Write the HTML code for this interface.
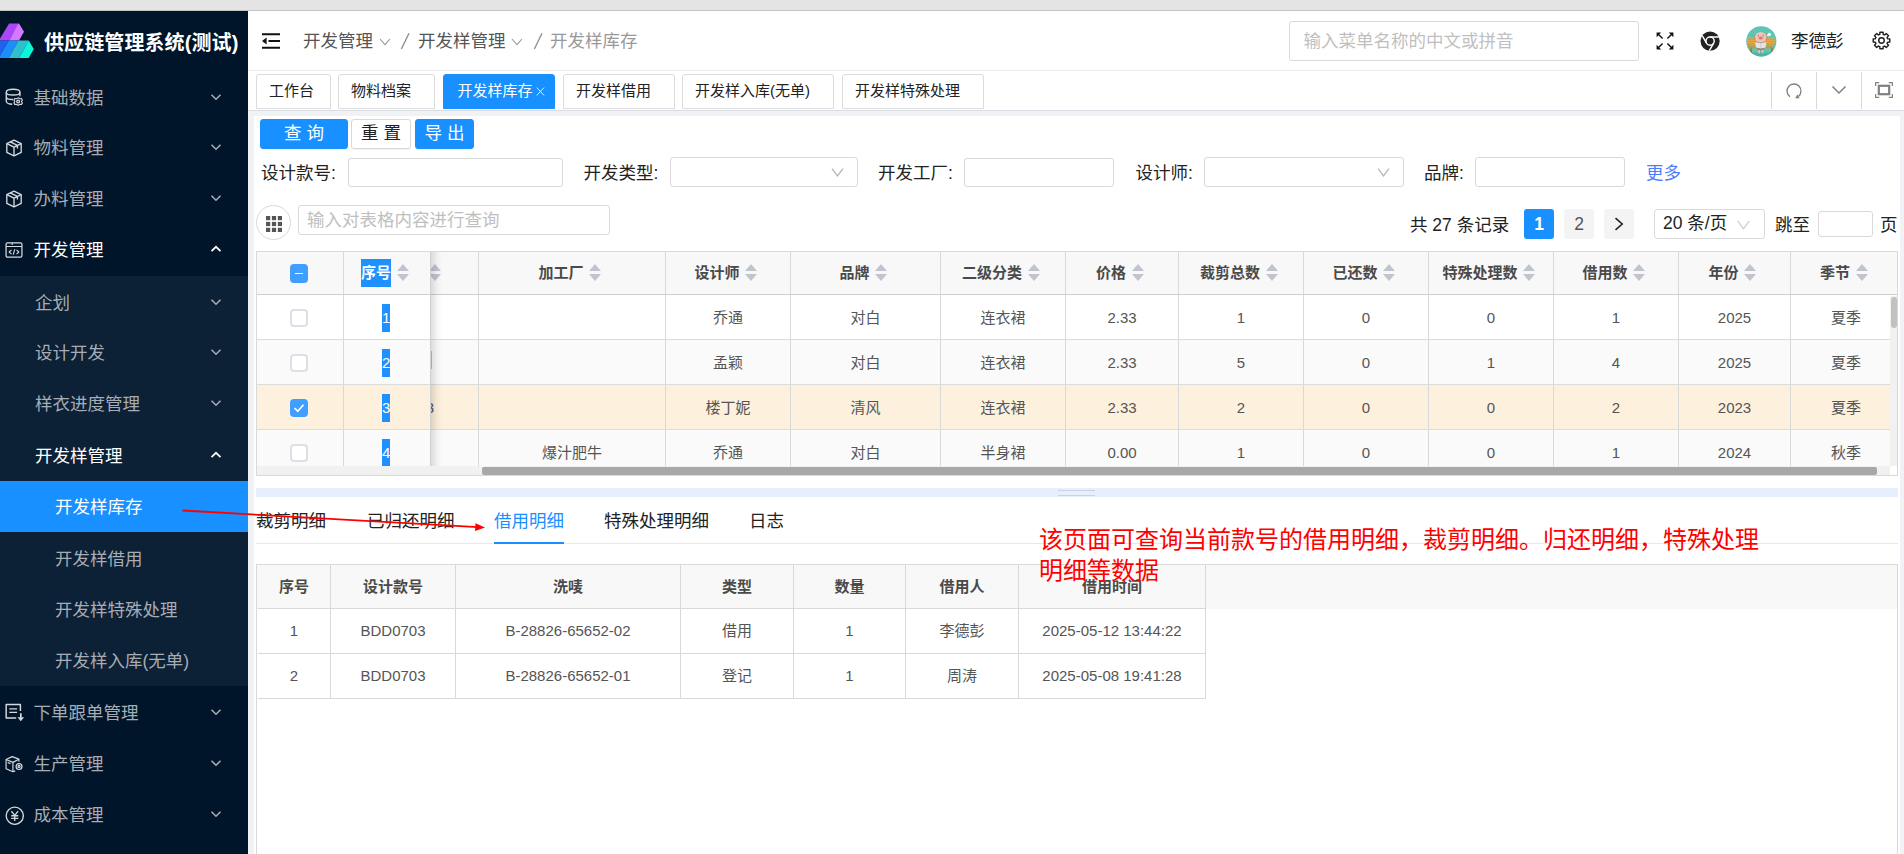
<!DOCTYPE html>
<html lang="zh-CN">
<head>
<meta charset="utf-8">
<title>供应链管理系统(测试)</title>
<style>
*{box-sizing:border-box;margin:0;padding:0}
html,body{width:1904px;height:854px;overflow:hidden}
body{position:relative;background:#f0f2f5;font-family:"Liberation Sans","Noto Sans CJK SC",sans-serif;font-size:17.5px;color:#222;}
.abs{position:absolute}
.t{position:absolute;white-space:nowrap;line-height:1}
/* top strip */
#strip{left:0;top:0;width:1904px;height:11px;background:#e4e4e4;border-bottom:1px solid #c4c4c4}
/* sidebar */
#side{left:0;top:11px;width:248px;height:843px;background:#001529}
#sub{left:0;top:265px;width:248px;height:410px;background:#0c2036}
#active{left:0;top:470px;width:248px;height:51px;background:#1890ff}
.mi{position:absolute;left:33.5px;height:30px;line-height:30px;font-size:17.5px;color:#a6adb4;white-space:nowrap}
.mi.w{color:#fff}
.mi.s1{left:35px}
.mi.s2{left:55px}
.arr{position:absolute;left:210px;width:12px;height:8px;margin-top:-1px}
.ico{position:absolute;left:5px;width:18px;height:18px;margin-top:1px}
#title{left:44px;top:20px;height:24px;line-height:24px;font-size:20px;font-weight:bold;color:#fff;letter-spacing:0.1px}
/* header */
#head{left:248px;top:11px;width:1656px;height:60px;background:#fff;border-bottom:1px solid #ebebeb}
.bc{position:absolute;top:18px;height:24px;line-height:24px;font-size:17.5px;color:#555;white-space:nowrap}
#hsearch{left:1041px;top:10px;width:350px;height:40px;border:1px solid #d9d9d9;border-radius:3px;background:#fff;color:#bfbfbf;font-size:17.5px;line-height:38px;padding-left:13.5px;white-space:nowrap}
/* tab bar */
#tabs{left:248px;top:71px;width:1656px;height:40px;background:#fff;border-bottom:1px solid #d9dce2}
.tab{position:absolute;top:3px;height:35px;border:1px solid #dcdcdc;border-radius:3px 3px 0 0;background:#fff;font-size:15px;line-height:32px;color:#222;text-align:left;padding-left:12px;white-space:nowrap}
.tab.on{background:#1890ff;border-color:#1890ff;color:#fff}
.tdiv{position:absolute;top:1px;width:1px;height:37px;background:#d9d9d9}
/* panel */
#panel{left:254px;top:116px;width:1646px;height:738px;background:#fff}
.btn{position:absolute;top:3px;height:30px;border-radius:3px;font-size:17.5px;line-height:27px;text-align:center;white-space:nowrap;border:1px solid #d9d9d9;background:#fff;color:#222;box-shadow:0 1px 1px rgba(0,0,0,.05)}
.btn.p{background:#1890ff;border-color:#1890ff;color:#fff}
.lab{position:absolute;top:45px;height:24px;line-height:24px;font-size:17.5px;color:#222;white-space:nowrap}
.inp{position:absolute;top:42px;height:29px;border:1px solid #d9d9d9;border-radius:3px;background:#fff}
.sel{top:41px;height:30px}
.chev{position:absolute;right:13px;top:9px;width:13px;height:10.500px}
/* pagination */
.pg{position:absolute;top:93px;width:30px;height:30px;border-radius:3px;background:#f4f4f5;font-size:17.5px;line-height:31px;text-align:center;color:#555}
.pg.on{background:#1890ff;color:#fff;font-weight:bold}
/* main table */
#mt{left:2px;top:135px;width:1642px;height:225px;border:1px solid #d9d9d9;overflow:hidden;background:#fff}
.hbg{top:0;height:44px;background:#f8f8f9;border-bottom:2px solid #cecece}
.hc{position:absolute;top:0;height:42px;border-right:1px solid #d9d9d9;font-size:15px;font-weight:bold;color:#4a4a4a;line-height:41px;text-align:center;white-space:nowrap;padding-right:4px}
.row{position:absolute;left:0;width:1639px;height:45px;border-bottom:1px solid #dcdcdc;background:#fff}
.row.alt{background:#fafafa}
.row.selr{background:#fdf0dd}
.c{position:absolute;top:0;height:44px;border-right:1px solid #d9d9d9;font-size:15px;color:#555;line-height:45px;text-align:center;white-space:nowrap}
.sort{display:inline-block;position:relative;width:12.5px;height:16px;vertical-align:middle;margin-left:5.5px;margin-top:-3px}
.sort:before,.sort:after{content:'';position:absolute;left:0;border:6.25px solid transparent}
.sort:before{top:-7px;border-bottom:7.5px solid #c0c4cc}
.sort:after{top:9.5px;border-top:7px solid #c0c4cc}
.cb{position:absolute;left:31.5px;width:18.5px;height:18.5px;border:2px solid #dcdfe6;border-radius:4px;background:#fff}
.cb.on{background:#409eff;border-color:#409eff}
.hl{background:#1e90ff;color:#fff;display:inline-block;line-height:28px;height:28px}
/* bottom tabs */
.bt{position:absolute;top:392px;height:26px;line-height:26px;font-size:17.5px;color:#222;white-space:nowrap}
/* bottom table */
.bh{position:absolute;top:0;height:44px;border-right:1px solid #d9d9d9;font-size:15px;font-weight:bold;color:#4a4a4a;line-height:43px;text-align:center;white-space:nowrap}
.bc2{position:absolute;height:45px;border-right:1px solid #d9d9d9;border-bottom:1px solid #d9d9d9;font-size:15px;color:#555;line-height:44px;text-align:center;white-space:nowrap}
.red{position:absolute;left:785px;font-size:24px;line-height:32px;color:#ff0000;white-space:nowrap}
</style>
</head>
<body>
<div id="strip" class="abs"></div>

<!-- SIDEBAR -->
<div id="side" class="abs">
  <div id="sub" class="abs"></div>
  <div id="active" class="abs"></div>
  <svg class="abs" style="left:0;top:12px" width="36" height="36" viewBox="0 0 36 36">
    <polygon points="9.1,0.4 19,0.4 9.4,17.6 0,17.6 0,15.4" fill="#ab47f8"/>
    <polygon points="17.6,1.7 19,0.4 24,8.7 19,17.6 9.4,17.6" fill="#d678ff"/>
    <polygon points="0,17.6 8.8,17.6 0,32.4" fill="#1f62ee"/>
    <polygon points="8.8,17.6 18.4,17.6 8.8,35 0,35 0,32.4" fill="#1c8dfb"/>
    <polygon points="18.4,17.6 28.7,17.6 19,35 8.8,35" fill="#2fc0cf"/>
    <polygon points="28.7,17.6 33.8,26.1 28.7,35 19,35" fill="#08f8d8"/>
  </svg>
  <div id="title" class="t">供应链管理系统(测试)</div>

  <!-- root items -->
  <svg class="ico" style="top:75.5px" viewBox="0 0 20 20" fill="none" stroke="#d5d9de" stroke-width="1.5"><ellipse cx="9" cy="4.6" rx="7.6" ry="3.2"/><path d="M1.4 4.6v10.2c0 1.8 3.2 3.2 6.6 3.2M16.6 4.6v4.6M1.4 9.6c0 1.8 3.4 3.2 7.6 3.2"/><circle cx="14.6" cy="15" r="1.5"/><path d="M14.6 10.9l1.9 1 1.9-.1.9 1.7-1 1.5 1 1.6-.9 1.6-1.9 0-1.9 1-1.9-1-1.9 0-.9-1.6 1-1.6-1-1.5.9-1.7 1.9.1z" stroke-width="1.2"/></svg>
  <div class="mi" style="top:71.5px">基础数据</div>
  <svg class="arr" style="top:82.5px" viewBox="0 0 12 8" fill="none" stroke="#a6adb4" stroke-width="1.6"><path d="M1.5 1.8L6 6.2l4.5-4.4"/></svg>

  <svg class="ico" style="top:127px" viewBox="0 0 20 20" fill="none" stroke="#d5d9de" stroke-width="1.5" stroke-linejoin="round"><path d="M10 1.2l8 3.9v9.8l-8 3.9-8-3.9V5.1z"/><path d="M2 5.1l8 3.9 8-3.9M10 9v9.8M5.8 3.2l8 3.9v3.4"/></svg>
  <div class="mi" style="top:122px">物料管理</div>
  <svg class="arr" style="top:133px" viewBox="0 0 12 8" fill="none" stroke="#a6adb4" stroke-width="1.6"><path d="M1.5 1.8L6 6.2l4.5-4.4"/></svg>

  <svg class="ico" style="top:178px" viewBox="0 0 20 20" fill="none" stroke="#d5d9de" stroke-width="1.5" stroke-linejoin="round"><path d="M10 1.2l8 3.9v9.8l-8 3.9-8-3.9V5.1z"/><path d="M2 5.1l8 3.9 8-3.9M10 9v9.8M5.8 3.2l8 3.9v3.4"/></svg>
  <div class="mi" style="top:173px">办料管理</div>
  <svg class="arr" style="top:184px" viewBox="0 0 12 8" fill="none" stroke="#a6adb4" stroke-width="1.6"><path d="M1.5 1.8L6 6.2l4.5-4.4"/></svg>

  <svg class="ico" style="top:229px" viewBox="0 0 20 20" fill="none" stroke="#d5d9de" stroke-width="1.4" stroke-linejoin="round"><rect x="1.2" y="2" width="17.6" height="16" rx="1.5"/><path d="M1.2 6.2h17.6M8 2v2.4M7.2 9.8l-2.6 2.4 2.6 2.4M12.8 9.8l2.6 2.4-2.6 2.4M10.9 9.2l-1.8 6" stroke-width="1.2"/></svg>
  <div class="mi w" style="top:224px">开发管理</div>
  <svg class="arr" style="top:235px" viewBox="0 0 12 8" fill="none" stroke="#fff" stroke-width="1.7"><path d="M1.5 6.2L6 1.8l4.5 4.4"/></svg>

  <!-- sub items -->
  <div class="mi s1" style="top:276.5px">企划</div>
  <svg class="arr" style="top:287.5px" viewBox="0 0 12 8" fill="none" stroke="#a6adb4" stroke-width="1.6"><path d="M1.5 1.8L6 6.2l4.5-4.4"/></svg>
  <div class="mi s1" style="top:327px">设计开发</div>
  <svg class="arr" style="top:338px" viewBox="0 0 12 8" fill="none" stroke="#a6adb4" stroke-width="1.6"><path d="M1.5 1.8L6 6.2l4.5-4.4"/></svg>
  <div class="mi s1" style="top:378px">样衣进度管理</div>
  <svg class="arr" style="top:389px" viewBox="0 0 12 8" fill="none" stroke="#a6adb4" stroke-width="1.6"><path d="M1.5 1.8L6 6.2l4.5-4.4"/></svg>
  <div class="mi s1 w" style="top:429.5px">开发样管理</div>
  <svg class="arr" style="top:440.5px" viewBox="0 0 12 8" fill="none" stroke="#fff" stroke-width="1.7"><path d="M1.5 6.2L6 1.8l4.5 4.4"/></svg>
  <div class="mi s2 w" style="top:481px">开发样库存</div>
  <div class="mi s2" style="top:532.5px">开发样借用</div>
  <div class="mi s2" style="top:583.5px">开发样特殊处理</div>
  <div class="mi s2" style="top:634.5px">开发样入库(无单)</div>

  <!-- root items 2 -->
  <svg class="ico" style="top:690.5px;width:19.5px;height:19.5px" viewBox="0 0 20 20" fill="none" stroke="#d5d9de" stroke-width="1.5" stroke-linejoin="round"><path d="M11.5 15.4H1.2V1.6h14.6v6.6"/><path d="M4.4 6h8M4.4 9.6h8" stroke-width="1.3"/><path d="M16.2 10.500v6" stroke-width="1.800"/><path d="M12.800 14.600l3.400 4.200 3.400-4.200z" fill="#d5d9de" stroke="none"/></svg>
  <div class="mi" style="top:687px">下单跟单管理</div>
  <svg class="arr" style="top:698px" viewBox="0 0 12 8" fill="none" stroke="#a6adb4" stroke-width="1.6"><path d="M1.5 1.8L6 6.2l4.5-4.4"/></svg>

  <svg class="ico" style="top:742.5px" viewBox="0 0 20 20" fill="none" stroke="#d5d9de" stroke-width="1.3" stroke-linejoin="round"><path d="M11.4 17.6l-2.6 1-7.6-3.4V5l6.8-3.2 7.4 2.8v3"/><path d="M1.2 5l7.6 3.2 6.6-3.6M8.8 8.2v10.4M3 8.4l3 1.2"/><circle cx="15.6" cy="12.8" r="3.3"/><circle cx="15.6" cy="12.8" r="1.2"/></svg>
  <div class="mi" style="top:738px">生产管理</div>
  <svg class="arr" style="top:749px" viewBox="0 0 12 8" fill="none" stroke="#a6adb4" stroke-width="1.6"><path d="M1.5 1.8L6 6.2l4.5-4.4"/></svg>

  <svg class="ico" style="top:793.5px;width:19.5px;height:19.5px;left:4.5px" viewBox="0 0 20 20" fill="none" stroke="#d5d9de" stroke-width="1.4"><circle cx="10" cy="10" r="8.8"/><path d="M6.6 5.4L10 9.6l3.4-4.2M10 9.6v5.8M6.4 10h7.2M6.4 12.8h7.2" stroke-width="1.3"/></svg>
  <div class="mi" style="top:789px">成本管理</div>
  <svg class="arr" style="top:800px" viewBox="0 0 12 8" fill="none" stroke="#a6adb4" stroke-width="1.6"><path d="M1.5 1.8L6 6.2l4.5-4.4"/></svg>
</div>

<!-- HEADER -->
<div id="head" class="abs">
  <!-- fold icon -->
  <svg class="abs" style="left:14px;top:22px" width="18" height="16" viewBox="0 0 18 16"><path d="M0 0.2h18v2H0zM6.5 7h11.5v2H6.5zM0 13.8h18v2H0z" fill="#111"/><path d="M0 8l4.6-3.4v6.8z" fill="#111"/></svg>
  <div class="bc" style="left:55px">开发管理</div>
  <svg class="abs" style="left:131px;top:26px" width="12" height="10" viewBox="0 0 12 10" fill="none" stroke="#999" stroke-width="1.1"><path d="M1 2l5 5.6L11 2"/></svg>
  <svg class="abs" style="left:152px;top:21px" width="10" height="18" viewBox="0 0 10 18"><path d="M1.400 17L9 1.200" stroke="#8a8a8a" stroke-width="1.300" fill="none"/></svg>
  <div class="bc" style="left:170px">开发样管理</div>
  <svg class="abs" style="left:263px;top:26px" width="12" height="10" viewBox="0 0 12 10" fill="none" stroke="#999" stroke-width="1.1"><path d="M1 2l5 5.6L11 2"/></svg>
  <svg class="abs" style="left:284.500px;top:21px" width="10" height="18" viewBox="0 0 10 18"><path d="M1.400 17L9 1.200" stroke="#8a8a8a" stroke-width="1.300" fill="none"/></svg>
  <div class="bc" style="left:302px;color:#999">开发样库存</div>
  <div id="hsearch" class="abs">输入菜单名称的中文或拼音</div>
  <!-- fullscreen -->
  <svg class="abs" style="left:1408px;top:21px" width="18" height="18" viewBox="0 0 18 18" fill="#111" stroke="#111" stroke-width="1.4"><path d="M2 2l4.6 4.6M16 2l-4.6 4.6M2 16l4.6-4.6M16 16l-4.6-4.6" fill="none"/><path d="M.6.6h4.6L.6 5.2zM17.400.6v4.600L12.800.6zM.6 17.400v-4.600l4.600 4.600zM17.400 17.400h-4.600l4.600-4.600z" stroke="none"/></svg>
  <!-- chrome -->
  <svg class="abs" style="left:1452.300px;top:19.500px" width="20.200" height="20.200" viewBox="0 0 21 21"><circle cx="10.500" cy="10.500" r="10" fill="#222"/><circle cx="10.500" cy="10.500" r="4.300" fill="none" stroke="#fff" stroke-width="1.500"/><path d="M10.500 6.200H19.600M6.800 12.650L2.300 4.800M14.200 12.650L9.700 20.400" stroke="#fff" stroke-width="1.500" fill="none"/></svg>
  <!-- avatar -->
  <svg class="abs" style="left:1497.500px;top:15px" width="31" height="31" viewBox="0 0 31 31"><defs><clipPath id="avc"><circle cx="15.300" cy="15.300" r="15.100"/></clipPath></defs><g clip-path="url(#avc)"><rect width="31" height="31" fill="#5cc5b3"/><rect x="0" y="26.500" width="31" height="5" fill="#4db3a2"/><rect x="1" y="11.400" width="27.600" height="1.300" fill="#e9a542"/><rect x="1" y="13.700" width="27.600" height="1.300" fill="#e9a542"/><rect x="1" y="16" width="27.600" height="1.300" fill="#e9a542"/><rect x="1" y="18.300" width="27.600" height="1.300" fill="#e39a38"/><rect x="2" y="20.300" width="26" height="2" fill="#d98f2f"/><rect x="4.300" y="22.300" width="1.400" height="5" fill="#a8661d"/><rect x="25.300" y="22.300" width="1.400" height="5" fill="#a8661d"/><ellipse cx="14.600" cy="20" rx="4.200" ry="4.500" fill="#8d8480"/><ellipse cx="9.400" cy="11" rx="1.900" ry="2.600" fill="#c98a78" transform="rotate(20 9.400 11)"/><ellipse cx="20" cy="10.600" rx="1.900" ry="2.600" fill="#c98a78" transform="rotate(-20 20 10.600)"/><ellipse cx="14.700" cy="11.300" rx="5.700" ry="5.200" fill="#ecc6b4"/><ellipse cx="14.700" cy="12" rx="2.100" ry="1.500" fill="#e0727c"/><circle cx="12.300" cy="9.800" r=".5" fill="#333"/><circle cx="17.100" cy="9.800" r=".5" fill="#333"/><path d="M9.200 16.200L14.700 17.300L20.400 16.200L19.600 21.600L14.700 22.400L9.900 21.600z" fill="#e4e4e4"/><path d="M14.700 17.300v5" stroke="#c2c2c2" stroke-width=".5"/><rect x="12.200" y="24" width="1.700" height="3.300" fill="#ecc6b4"/><rect x="15.600" y="24" width="1.700" height="3.300" fill="#ecc6b4"/><circle cx="23.300" cy="8.400" r="1.700" fill="#f3f6f4"/><circle cx="22" cy="9.600" r="1" fill="#f3f6f4"/></g></svg>
  <div class="bc" style="left:1543px;color:#222">李德彭</div>
  <!-- gear -->
  <svg class="abs" style="left:1623.500px;top:20px" width="19" height="19" viewBox="0 0 20 20" fill="none" stroke="#1f1f1f" stroke-width="1.500" stroke-linejoin="round"><circle cx="10" cy="10" r="2.900"/><path d="M8.21 3.54L8.30 1.26L11.70 1.26L11.79 3.54L13.30 4.17L14.98 2.62L17.38 5.02L15.83 6.70L16.46 8.21L18.74 8.30L18.74 11.70L16.46 11.79L15.83 13.30L17.38 14.98L14.98 17.38L13.30 15.83L11.79 16.46L11.70 18.74L8.30 18.74L8.21 16.46L6.70 15.83L5.02 17.38L2.62 14.98L4.17 13.30L3.54 11.79L1.26 11.70L1.26 8.30L3.54 8.21L4.17 6.70L2.62 5.02L5.02 2.62L6.70 4.17z"/></svg>
</div>

<!-- TAB BAR -->
<div id="tabs" class="abs">
  <div class="tab" style="left:8px;width:75px">工作台</div>
  <div class="tab" style="left:90px;width:97px">物料档案</div>
  <div class="tab on" style="left:195px;width:112px;padding-left:13.500px">开发样库存<svg style="position:absolute;left:92px;top:11.500px" width="9" height="9" viewBox="0 0 9 9" fill="none" stroke="#e6f2ff" stroke-width="1"><path d="M0.800 0.600L8 8.400M8 0.600L0.800 8.400"/></svg></div>
  <div class="tab" style="left:315px;width:112px">开发样借用</div>
  <div class="tab" style="left:434px;width:152px">开发样入库(无单)</div>
  <div class="tab" style="left:594px;width:142px">开发样特殊处理</div>
  <div class="tdiv" style="left:1523px"></div>
  <div class="tdiv" style="left:1568px"></div>
  <div class="tdiv" style="left:1613px"></div>
  <svg class="abs" style="left:1537.400px;top:10.600px" width="18" height="18" viewBox="0 0 18 18" fill="none" stroke="#808080" stroke-width="1.300"><path d="M4.980 14.730A7 7 0 1 1 13.400 14.400"/><path d="M10.200 16.200L14.600 16.300L12.300 12.600z" fill="#808080" stroke="none"/></svg>
  <svg class="abs" style="left:1583px;top:14px" width="16" height="10" viewBox="0 0 16 10" fill="none" stroke="#808080" stroke-width="1.500"><path d="M1.500 1.500L8 8l6.500-6.500"/></svg>
  <svg class="abs" style="left:1627px;top:11px" width="18" height="16" viewBox="0 0 18 16" fill="none" stroke="#808080"><rect x="3.800" y="3.800" width="10.400" height="8.400" stroke-width="2.200"/><path d="M.6 4V.6h3.600M13.800.6h3.600V4M17.400 12v3.400h-3.600M4.200 15.400H.6V12" stroke-width="1.200"/></svg>
</div>

<!-- PANEL -->
<div id="panel" class="abs">
  <div class="btn p" style="left:6px;width:88px">查 询</div>
  <div class="btn" style="left:97px;width:60px">重 置</div>
  <div class="btn p" style="left:161px;width:59px">导 出</div>
  <div class="lab" style="left:7px">设计款号:</div><div class="inp" style="left:94px;width:215px"></div>
  <div class="lab" style="left:329.5px">开发类型:</div><div class="inp sel" style="left:416px;width:188px"><svg class="chev" viewBox="0 0 12 10" fill="none" stroke="#b5b5b5" stroke-width="1.2"><path d="M0.8 1.5L6 8.500L11.200 1.500"/></svg></div>
  <div class="lab" style="left:624px">开发工厂:</div><div class="inp" style="left:710px;width:150px"></div>
  <div class="lab" style="left:881.5px">设计师:</div><div class="inp sel" style="left:950px;width:200px"><svg class="chev" viewBox="0 0 12 10" fill="none" stroke="#b5b5b5" stroke-width="1.2"><path d="M0.8 1.5L6 8.500L11.200 1.500"/></svg></div>
  <div class="lab" style="left:1170px">品牌:</div><div class="inp sel" style="left:1221px;width:150px"></div>
  <div class="lab" style="left:1392px;color:#4a7dff">更多</div>
  <div class="abs" style="left:2px;top:89px;width:35px;height:35px;border:1px solid #d9d9d9;border-radius:50%;background:#fff"><svg class="abs" style="left:9px;top:9.5px" width="16" height="16" viewBox="0 0 16 16" fill="#555"><rect x="0" y="0" width="4.2" height="4.2"/><rect x="5.9" y="0" width="4.2" height="4.2"/><rect x="11.8" y="0" width="4.2" height="4.2"/><rect x="0" y="5.9" width="4.2" height="4.2"/><rect x="5.9" y="5.9" width="4.2" height="4.2"/><rect x="11.8" y="5.9" width="4.2" height="4.2"/><rect x="0" y="11.8" width="4.2" height="4.2"/><rect x="5.9" y="11.8" width="4.2" height="4.2"/><rect x="11.8" y="11.8" width="4.2" height="4.2"/></svg></div>
  <div class="abs" style="left:44px;top:89px;width:312px;height:30px;border:1px solid #d9d9d9;border-radius:3px;color:#bfbfbf;font-size:17.5px;line-height:29px;padding-left:8px;white-space:nowrap">输入对表格内容进行查询</div>
  <div class="lab" style="left:1156px;top:96.5px">共 27 条记录</div>
  <div class="pg on" style="left:1270px">1</div><div class="pg" style="left:1310px">2</div>
  <div class="pg" style="left:1350px"><svg style="position:absolute;left:10px;top:8px" width="10" height="14" viewBox="0 0 10 14" fill="none" stroke="#222" stroke-width="1.6"><path d="M1.5 1.2L8.2 7L1.5 12.800"/></svg></div>
  <div class="abs" style="left:1400px;top:93px;width:110.5px;height:29.5px;border:1px solid #d9d9d9;border-radius:3px;font-size:17.5px;line-height:27px;padding-left:8px;color:#222;white-space:nowrap">20 条/页<svg style="position:absolute;right:13.5px;top:9.5px" width="13" height="10" viewBox="0 0 13 10" fill="none" stroke="#c4c8cf" stroke-width="1.2"><path d="M0.8 1L6.5 8.8L12.2 1"/></svg></div>
  <div class="lab" style="left:1521px;top:96.5px">跳至</div>
  <div class="abs" style="left:1564px;top:94.5px;width:54.5px;height:26px;border:1px solid #d9d9d9;border-radius:3px"></div>
  <div class="lab" style="left:1626px;top:96.5px">页</div>
  <div id="mt" class="abs"><div class="abs" style="left:1px;top:0;width:1639px;height:223px">
    <div class="abs hbg" style="left:-1px;width:1640px"></div>
    <div class="hc" style="left:172px;width:49px;text-align:left;padding:0"><i class="sort" style="margin-left:-1.5px"></i></div>
    <div class="hc" style="left:221px;width:187px">加工厂<i class="sort"></i></div>
    <div class="hc" style="left:408px;width:125px">设计师<i class="sort"></i></div>
    <div class="hc" style="left:533px;width:150px">品牌<i class="sort"></i></div>
    <div class="hc" style="left:683px;width:125px">二级分类<i class="sort"></i></div>
    <div class="hc" style="left:808px;width:113px">价格<i class="sort"></i></div>
    <div class="hc" style="left:921px;width:125px">裁剪总数<i class="sort"></i></div>
    <div class="hc" style="left:1046px;width:125px">已还数<i class="sort"></i></div>
    <div class="hc" style="left:1171px;width:125px">特殊处理数<i class="sort"></i></div>
    <div class="hc" style="left:1296px;width:125px">借用数<i class="sort"></i></div>
    <div class="hc" style="left:1421px;width:112px">年份<i class="sort"></i></div>
    <div class="hc" style="left:1533px;width:106px;border-right:none;padding-right:0">季节<i class="sort"></i></div>
    <div class="row " style="top:43px">
      <div class="c" style="left:172px;width:49px"></div>
      <div class="c" style="left:221px;width:187px"></div>
      <div class="c" style="left:408px;width:125px">乔通</div>
      <div class="c" style="left:533px;width:150px">对白</div>
      <div class="c" style="left:683px;width:125px">连衣裙</div>
      <div class="c" style="left:808px;width:113px">2.33</div>
      <div class="c" style="left:921px;width:125px">1</div>
      <div class="c" style="left:1046px;width:125px">0</div>
      <div class="c" style="left:1171px;width:125px">0</div>
      <div class="c" style="left:1296px;width:125px">1</div>
      <div class="c" style="left:1421px;width:112px">2025</div>
      <div class="c" style="left:1533px;width:110px;border-right:none">夏季</div>
    </div>
    <div class="row alt" style="top:88px">
      <div class="c" style="left:172px;width:49px"></div>
      <div class="c" style="left:221px;width:187px"></div>
      <div class="c" style="left:408px;width:125px">孟颖</div>
      <div class="c" style="left:533px;width:150px">对白</div>
      <div class="c" style="left:683px;width:125px">连衣裙</div>
      <div class="c" style="left:808px;width:113px">2.33</div>
      <div class="c" style="left:921px;width:125px">5</div>
      <div class="c" style="left:1046px;width:125px">0</div>
      <div class="c" style="left:1171px;width:125px">1</div>
      <div class="c" style="left:1296px;width:125px">4</div>
      <div class="c" style="left:1421px;width:112px">2025</div>
      <div class="c" style="left:1533px;width:110px;border-right:none">夏季</div>
    </div>
    <div class="row selr" style="top:133px">
      <div class="c" style="left:172px;width:49px"></div>
      <div class="c" style="left:221px;width:187px"></div>
      <div class="c" style="left:408px;width:125px">楼丁妮</div>
      <div class="c" style="left:533px;width:150px">清风</div>
      <div class="c" style="left:683px;width:125px">连衣裙</div>
      <div class="c" style="left:808px;width:113px">2.33</div>
      <div class="c" style="left:921px;width:125px">2</div>
      <div class="c" style="left:1046px;width:125px">0</div>
      <div class="c" style="left:1171px;width:125px">0</div>
      <div class="c" style="left:1296px;width:125px">2</div>
      <div class="c" style="left:1421px;width:112px">2023</div>
      <div class="c" style="left:1533px;width:110px;border-right:none">夏季</div>
    </div>
    <div class="row alt" style="top:178px">
      <div class="c" style="left:172px;width:49px"></div>
      <div class="c" style="left:221px;width:187px">爆汁肥牛</div>
      <div class="c" style="left:408px;width:125px">乔通</div>
      <div class="c" style="left:533px;width:150px">对白</div>
      <div class="c" style="left:683px;width:125px">半身裙</div>
      <div class="c" style="left:808px;width:113px">0.00</div>
      <div class="c" style="left:921px;width:125px">1</div>
      <div class="c" style="left:1046px;width:125px">0</div>
      <div class="c" style="left:1171px;width:125px">0</div>
      <div class="c" style="left:1296px;width:125px">1</div>
      <div class="c" style="left:1421px;width:112px">2024</div>
      <div class="c" style="left:1533px;width:110px;border-right:none">秋季</div>
    </div>
    <div class="abs" style="left:172px;top:99px;width:1.5px;height:18px;background:#8fd0f5"></div>
    <div class="abs" style="left:172px;top:133px;width:8px;height:44px;overflow:hidden"><div class="c" style="left:-5px;width:10px;border:none">3</div></div>
    <div class="abs" style="left:172.5px;top:0;width:11px;height:214px;background:linear-gradient(to right,rgba(0,0,0,.12),rgba(0,0,0,.03) 60%,rgba(0,0,0,0))"></div>
    <div class="abs hbg" style="left:-1px;width:173.5px;border-right:1px solid #d0d0d0"></div>
    <div class="hc" style="left:0;width:86px;padding:0"><div class="cb on" style="top:12px"><div style="position:absolute;left:3px;top:6.5px;width:8.5px;height:1.6px;background:#fff"></div></div></div>
    <div class="hc" style="left:86px;width:86.5px;border-right:none;text-align:left;padding:0 0 0 17px"><span class="hl" style="vertical-align:middle;margin-top:-3px">序号</span><i class="sort"></i></div>
    <div class="abs" style="left:-1px;top:43px;width:173.5px;height:45px;background:#fff;border-bottom:1px solid #dcdcdc;border-right:1px solid #d0d0d0"><div class="abs" style="left:1px;top:0;width:172px;height:45px">
      <div class="c" style="left:0;width:86px"><div class="cb" style="top:13.5px"></div></div>
      <div class="c" style="left:85px;width:86px;border-right:none"><span class="hl" style="vertical-align:middle;margin-top:-3px;width:8px;overflow:hidden">1</span></div>
    </div></div>
    <div class="abs" style="left:-1px;top:88px;width:173.5px;height:45px;background:#fafafa;border-bottom:1px solid #dcdcdc;border-right:1px solid #d0d0d0"><div class="abs" style="left:1px;top:0;width:172px;height:45px">
      <div class="c" style="left:0;width:86px"><div class="cb" style="top:13.5px"></div></div>
      <div class="c" style="left:85px;width:86px;border-right:none"><span class="hl" style="vertical-align:middle;margin-top:-3px;width:8px;overflow:hidden">2</span></div>
    </div></div>
    <div class="abs" style="left:-1px;top:133px;width:173.5px;height:45px;background:#fdf0dd;border-bottom:1px solid #dcdcdc;border-right:1px solid #d0d0d0"><div class="abs" style="left:1px;top:0;width:172px;height:45px">
      <div class="c" style="left:0;width:86px"><div class="cb on" style="top:13.5px"><svg style="position:absolute;left:1.5px;top:2.5px" width="12" height="10" viewBox="0 0 12 10" fill="none" stroke="#fff" stroke-width="1.7"><path d="M1.5 5L4.8 8.2L10.5 1.8"/></svg></div></div>
      <div class="c" style="left:85px;width:86px;border-right:none"><span class="hl" style="vertical-align:middle;margin-top:-3px;width:8px;overflow:hidden">3</span></div>
    </div></div>
    <div class="abs" style="left:-1px;top:178px;width:173.5px;height:45px;background:#fafafa;border-bottom:1px solid #dcdcdc;border-right:1px solid #d0d0d0"><div class="abs" style="left:1px;top:0;width:172px;height:45px">
      <div class="c" style="left:0;width:86px"><div class="cb" style="top:13.5px"></div></div>
      <div class="c" style="left:85px;width:86px;border-right:none"><span class="hl" style="vertical-align:middle;margin-top:-3px;width:8px;overflow:hidden">4</span></div>
    </div></div>
    <div class="abs" style="left:1632px;top:44px;width:7px;height:170px;background:#f1f1f1"></div>
    <div class="abs" style="left:1632.5px;top:45px;width:6.5px;height:31px;background:#c1c1c1;border-radius:3px"></div>
    <div class="abs" style="left:-1px;top:214px;width:1640px;height:9px;background:#f1f1f1"></div>
    <div class="abs" style="left:224px;top:214.5px;width:1395px;height:8.5px;background:#a8a8a8;border-radius:2px"></div>
    <div class="abs" style="left:1632px;top:214px;width:7px;height:9px;background:#fff"></div>
  </div></div>
  <div class="abs" style="left:2px;top:372px;width:1642px;height:9px;background:#e6effb"></div>
  <div class="abs" style="left:804px;top:374px;width:37px;height:1px;background:#c9d3e3"></div>
  <div class="abs" style="left:804px;top:378.5px;width:37px;height:1px;background:#c9d3e3"></div>
  <div class="abs" style="left:2px;top:427px;width:1642px;height:1px;background:#e8e8e8"></div>
  <div class="bt" style="left:2px">裁剪明细</div>
  <div class="bt" style="left:113px">已归还明细</div>
  <div class="bt" style="left:240px;color:#1890ff">借用明细</div>
  <div class="bt" style="left:350px">特殊处理明细</div>
  <div class="bt" style="left:495px">日志</div>
  <div class="abs" style="left:240px;top:425.5px;width:70px;height:2.5px;background:#1890ff"></div>
  <div class="abs" style="left:2px;top:448px;width:1642px;height:300px;border:1px solid #d9d9d9;border-bottom:none;background:#fff"><div class="abs" style="left:1px;top:0;width:1639px;height:299px">
    <div class="abs" style="left:-1px;top:0;width:1640px;height:44px;background:#f8f8f8"></div>
    <div class="bh" style="left:0px;width:73px;border-bottom:1px solid #d9d9d9">序号</div>
    <div class="bh" style="left:73px;width:125px;border-bottom:1px solid #d9d9d9">设计款号</div>
    <div class="bh" style="left:198px;width:225px;border-bottom:1px solid #d9d9d9">洗唛</div>
    <div class="bh" style="left:423px;width:113px;border-bottom:1px solid #d9d9d9">类型</div>
    <div class="bh" style="left:536px;width:112px;border-bottom:1px solid #d9d9d9">数量</div>
    <div class="bh" style="left:648px;width:113px;border-bottom:1px solid #d9d9d9">借用人</div>
    <div class="bh" style="left:761px;width:187px;border-bottom:1px solid #d9d9d9">借用时间</div>
    <div class="bc2" style="left:0px;top:44px;width:73px">1</div>
    <div class="bc2" style="left:73px;top:44px;width:125px">BDD0703</div>
    <div class="bc2" style="left:198px;top:44px;width:225px">B-28826-65652-02</div>
    <div class="bc2" style="left:423px;top:44px;width:113px">借用</div>
    <div class="bc2" style="left:536px;top:44px;width:112px">1</div>
    <div class="bc2" style="left:648px;top:44px;width:113px">李德彭</div>
    <div class="bc2" style="left:761px;top:44px;width:187px">2025-05-12 13:44:22</div>
    <div class="bc2" style="left:0px;top:89px;width:73px">2</div>
    <div class="bc2" style="left:73px;top:89px;width:125px">BDD0703</div>
    <div class="bc2" style="left:198px;top:89px;width:225px">B-28826-65652-01</div>
    <div class="bc2" style="left:423px;top:89px;width:113px">登记</div>
    <div class="bc2" style="left:536px;top:89px;width:112px">1</div>
    <div class="bc2" style="left:648px;top:89px;width:113px">周涛</div>
    <div class="bc2" style="left:761px;top:89px;width:187px">2025-05-08 19:41:28</div>
  </div></div>
  <div class="red" style="top:407.5px;line-height:31.5px">该页面可查询当前款号的借用明细，裁剪明细。归还明细，特殊处理<br>明细等数据</div>
</div>
<svg class="abs" style="left:0;top:0;pointer-events:none" width="1904" height="854" viewBox="0 0 1904 854"><path d="M182.500 510.500L478 527.200" stroke="#ff0000" stroke-width="1.800" fill="none"/><path d="M485 527.600L475.500 523.200L475 531z" fill="#ff0000"/></svg>
</body>
</html>
